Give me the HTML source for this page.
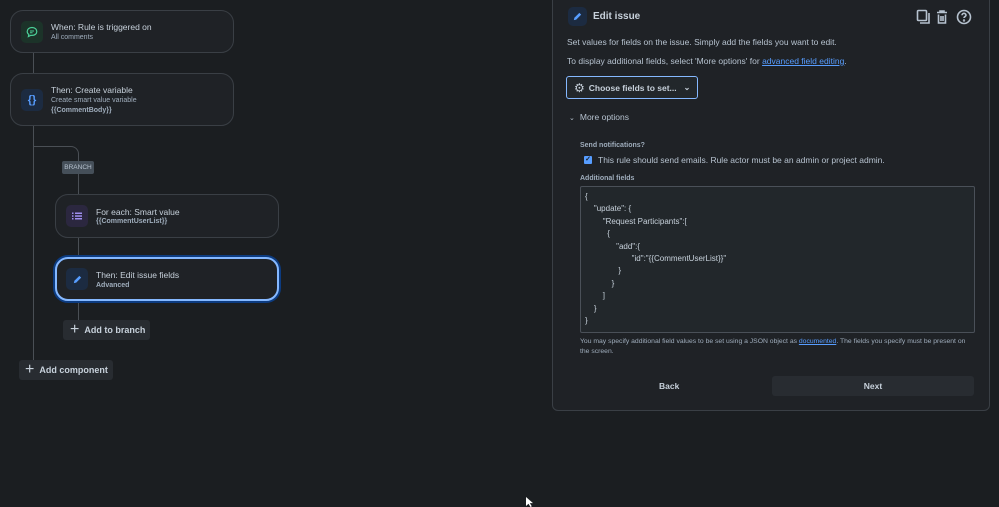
<!DOCTYPE html>
<html><head><meta charset="utf-8"><style>
*{box-sizing:border-box;margin:0;padding:0}
body{width:999px;height:504px;background:#1b1e21;font-family:"Liberation Sans",sans-serif;color:#b6c2cf;position:relative;overflow:hidden;font-size:9px}
.abs{position:absolute}
.card{position:absolute;border:1px solid #3a3f45;border-radius:13px;background:#1f2226}
.ic{position:absolute;left:10px;width:22px;height:22px;border-radius:5px;display:flex;align-items:center;justify-content:center}
.t{position:absolute;left:40px;font-size:8.5px;color:#c7d1db}
.s{position:absolute;left:40px;font-size:7px;color:#9fadbc}
.line{position:absolute;background:#4a4f55}
.btn{position:absolute;background:#282c31;border-radius:3px;color:#c7d1db;font-weight:bold;font-size:9px;display:flex;align-items:center;white-space:nowrap}
.p{position:absolute;left:567px;font-size:8.5px;color:#b6c2cf;white-space:nowrap}
</style></head><body>
<div class="line" style="left:33px;top:52px;width:1px;height:310px"></div>
<div class="abs" style="left:33px;top:146px;width:46px;height:50px;border-top:1px solid #4a4f55;border-right:1px solid #4a4f55;border-top-right-radius:8px"></div>
<div class="line" style="left:78px;top:237px;width:1px;height:84px"></div>

<div class="card" style="left:10px;top:10px;width:224px;height:43px">
<div class="ic" style="top:10px;background:#1c3329"><svg width="12" height="12" viewBox="0 0 12 12"><path d="M6 1.5C3 1.5 1.2 3.3 1.2 5.5c0 1.2.6 2.2 1.6 2.9L2.4 10.5l2.4-1.2c.4.1.8.1 1.2.1 3 0 4.8-1.8 4.8-3.9S9 1.5 6 1.5z" fill="none" stroke="#4bce97" stroke-width="1.2"/><path d="M4 5h4M4 6.7h2.5" stroke="#4bce97" stroke-width="1"/></svg></div>
<div class="t" style="top:11px">When: Rule is triggered on</div><div class="s" style="top:23px">All comments</div></div>

<div class="card" style="left:10px;top:73px;width:224px;height:53px">
<div class="ic" style="top:15px;background:#1c2b41;color:#579dff;font-weight:bold;font-size:11px">{}</div>
<div class="t" style="top:11px">Then: Create variable</div><div class="s" style="top:23px">Create smart value variable</div><div class="s" style="top:33px;font-weight:bold">{{CommentBody}}</div></div>

<div class="abs" style="left:62px;top:161px;width:32px;height:13px;background:#454f59;border-radius:2px;font-size:6.5px;color:#b6c2cf;display:flex;align-items:center;justify-content:center">BRANCH</div>

<div class="card" style="left:55px;top:194px;width:224px;height:44px">
<div class="ic" style="top:10px;background:#2b273f"><svg width="10" height="10" viewBox="0 0 10 10" fill="#9f8fef"><rect x="0" y="1.5" width="1.5" height="1.5"/><rect x="3" y="1.5" width="7" height="1.5"/><rect x="0" y="4.3" width="1.5" height="1.5"/><rect x="3" y="4.3" width="7" height="1.5"/><rect x="0" y="7" width="1.5" height="1.5"/><rect x="3" y="7" width="7" height="1.5"/></svg></div>
<div class="t" style="top:12px">For each: Smart value</div><div class="s" style="top:23px;font-weight:bold">{{CommentUserList}}</div></div>

<div class="card" style="left:55px;top:257px;width:224px;height:44px;border:2px solid #85b8ff;box-shadow:0 0 0 2px #0c3b80">
<div class="ic" style="top:9px;left:9px;background:#1c2b41"><svg width="11" height="11" viewBox="0 0 12 12"><path d="M2 10l.6-2.6L8 2l2 2-5.4 5.4z" fill="#579dff"/></svg></div>
<div class="t" style="top:11px;left:39px">Then: Edit issue fields</div><div class="s" style="top:23px;left:39px;font-weight:bold">Advanced</div></div>

<div class="btn" style="left:63px;top:320px;width:87px;height:20px;padding-left:7px"><span style="font-size:16px;font-weight:normal;margin-right:5px;line-height:1">+</span>Add to branch</div>
<div class="btn" style="left:19px;top:360px;width:94px;height:20px;padding-left:6px"><span style="font-size:16px;font-weight:normal;margin-right:5px;line-height:1">+</span>Add component</div>

<div class="abs" style="left:552px;top:-10px;width:438px;height:421px;background:#1f2226;border:1px solid #3a3f45;border-radius:6px"></div>
<div class="abs" style="left:568px;top:7px;width:19px;height:19px;background:#1c2b41;border-radius:5px;display:flex;align-items:center;justify-content:center"><svg width="11" height="11" viewBox="0 0 12 12"><path d="M2 10l.6-2.6L8 2l2 2-5.4 5.4z" fill="#579dff"/></svg></div>
<div class="abs" style="left:593px;top:11px;font-size:10px;font-weight:bold;color:#c7d1db">Edit issue</div>
<svg class="abs" style="left:916px;top:9px" width="56" height="16" viewBox="0 0 56 16" fill="none" stroke="#b6c2cf" stroke-width="1.6"><rect x="1.5" y="1.5" width="9" height="10" rx="1"/><path d="M4 14h9V4"/><path d="M21 3.5h10M24 3.5V2h4v1.5M22.5 5.5v8.5h7V5.5M25 7v5M27 7v5"/><circle cx="48" cy="8" r="6.5"/><path d="M46 6.3a2 2 0 114 0c0 1.2-2 1.3-2 2.7" /><circle cx="48" cy="11.5" r=".4" fill="#b6c2cf"/></svg>

<div class="p" style="top:37px">Set values for fields on the issue. Simply add the fields you want to edit.</div>
<div class="p" style="top:56px">To display additional fields, select 'More options' for <span style="color:#579dff;text-decoration:underline">advanced field editing</span>.</div>
<div class="abs" style="left:566px;top:76px;width:132px;height:23px;border:1.5px solid #85b8ff;border-radius:3px;background:#22272b;display:flex;align-items:center;padding-left:7px;font-size:8.5px;font-weight:bold;color:#c7d1db;white-space:nowrap"><span style="font-size:12px;margin-right:4px;font-weight:normal">⚙</span>Choose fields to set... <span style="margin-left:7px;font-size:8px">⌄</span></div>
<div class="p" style="top:112px;left:569px"><span style="font-size:7px;margin-right:5px">⌄</span>More options</div>
<div class="abs" style="left:580px;top:142px;font-size:7px;font-weight:bold;color:#9fadbc">Send notifications?</div>
<div class="abs" style="left:584px;top:156px;width:8px;height:8px;background:#579dff;border-radius:1px;color:#1d2125;font-size:7px;line-height:8px;text-align:center;font-weight:bold">✓</div>
<div class="abs" style="left:598px;top:155px;font-size:8.5px;color:#b6c2cf;white-space:nowrap">This rule should send emails. Rule actor must be an admin or project admin.</div>
<div class="abs" style="left:580px;top:175px;font-size:7px;font-weight:bold;color:#9fadbc">Additional fields</div>
<div class="abs" style="left:580px;top:186px;width:395px;height:147px;border:1px solid #4a5058;border-radius:2px;background:#22272b"></div>
<pre class="abs" style="left:585px;top:191px;font-family:'Liberation Sans',sans-serif;font-size:8px;line-height:12.4px;color:#c7d1db">{
    "update": {
        "Request Participants":[
          {
              "add":{
                     "id":"{{CommentUserList}}"
               }
            }
        ]
    }
}</pre>
<div class="abs" style="left:580px;top:337px;width:392px;font-size:6.8px;line-height:10px;color:#9fadbc">You may specify additional field values to be set using a JSON object as <span style="color:#579dff;text-decoration:underline">documented</span>. The fields you specify must be present on the screen.</div>
<div class="abs" style="left:659px;top:381px;font-size:8.5px;font-weight:bold;color:#c7d1db">Back</div>
<div class="abs" style="left:772px;top:376px;width:202px;height:20px;background:#282c31;border-radius:3px;font-size:8.5px;font-weight:bold;color:#c7d1db;display:flex;align-items:center;justify-content:center">Next</div>
<svg class="abs" style="left:526px;top:497px" width="8" height="10"><path d="M0 0v9l2.5-2.3 2 3.3 1.3-.7-2-3.2H7z" fill="#fff"/></svg>
</body></html>
